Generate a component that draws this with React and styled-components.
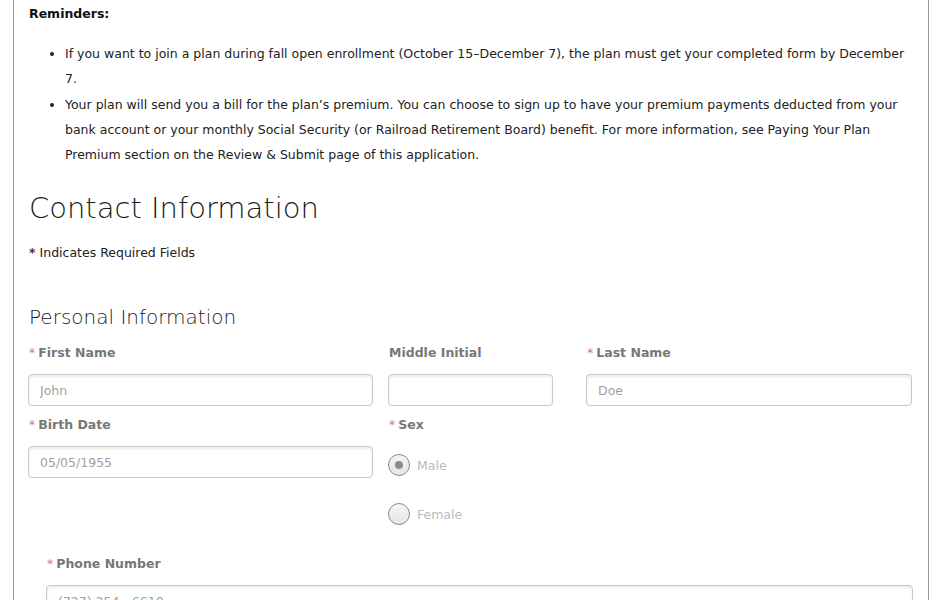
import React from 'react'
import styled, { createGlobalStyle } from 'styled-components'

const GlobalStyle = createGlobalStyle`
  body {
    margin: 0;
    background: #fff;
    font-family: "DejaVu Sans", "Open Sans", sans-serif;
    color: #222;
  }
`;

const Panel = styled.div`
  margin: 0 10px 0 13px;
  border-left: 1px solid #999;
  border-right: 1px solid #999;
  padding: 4px 15px 40px 15px;
  min-height: 600px;
  box-sizing: border-box;
`;

const ReminderTitle = styled.div`
  font-size: 12.5px;
  font-weight: bold;
  line-height: 20px;
  color: #111;
`;

const ReminderList = styled.ul`
  margin: 17px 0 0 0;
  padding-left: 36px;
  font-size: 12.5px;
  line-height: 25.3px;
  color: #222;
`;

const PageTitle = styled.h1`
  margin: 21px 0 0 0;
  font-size: 29px;
  font-weight: 200;
  line-height: 40px;
  color: #1a1a1a;
`;

const RequiredNote = styled.p`
  margin: 15px 0 0 0;
  font-size: 12.5px;
  line-height: 20px;
  color: #222;
`;

const NoteStar = styled.span`
  color: #7a1c12;
  font-weight: bold;
`;

const SectionTitle = styled.h2`
  margin: 39px 0 0 0;
  font-size: 20px;
  font-weight: 200;
  line-height: 30px;
  color: #222;
`;

const FieldGrid = styled.div`
  display: grid;
  grid-template-columns: 345px 165px 344px;
  column-gap: 15px;
  margin-top: 11px;
  margin-left: -1px;
  & > :nth-child(3n) {
    margin-left: 18px;
  }
`;

const Field = styled.div`
  display: flex;
  flex-direction: column;
`;

const Label = styled.label`
  font-size: 12.5px;
  font-weight: bold;
  color: #777;
  line-height: 20px;
  height: 20px;
  margin-bottom: 11px;
  padding-left: 1px;
`;

const Star = styled.span`
  color: #d4826f;
  font-weight: normal;
  margin-right: 3px;
`;

const Input = styled.input`
  box-sizing: border-box;
  height: 32px;
  width: 100%;
  border: 1px solid #c8c8c8;
  border-radius: 4px;
  box-shadow: inset 0 2px 3px rgba(0, 0, 0, 0.08);
  padding: 0 11px;
  font-family: inherit;
  font-size: 12.5px;
  color: #a0a0a0;
  margin-bottom: 9px;
  outline: none;
`;

const RadioGroup = styled.div`
  display: flex;
  flex-direction: column;
  gap: 27px;
  padding-top: 8px;
`;

const RadioRow = styled.label`
  display: flex;
  align-items: center;
  gap: 7px;
  font-size: 12.5px;
  color: #bbb;
`;

const RadioCircle = styled.span`
  box-sizing: border-box;
  width: 22px;
  height: 22px;
  border-radius: 50%;
  border: 1px solid #8a8a8a;
  background: linear-gradient(#f4f4f4, #e6e6e6);
  display: flex;
  align-items: center;
  justify-content: center;
  &::after {
    content: '';
    display: ${p => (p.$checked ? 'block' : 'none')};
    width: 8px;
    height: 8px;
    border-radius: 50%;
    background: #8c8c8c;
  }
`;

const PhoneBlock = styled.div`
  margin-top: 29px;
  padding-left: 17px;
  display: flex;
  flex-direction: column;
`;

function Radio({ label, checked }) {
  return (
    <RadioRow>
      <RadioCircle $checked={checked} />
      {label}
    </RadioRow>
  )
}

export default function App() {
  return (
    <>
      <GlobalStyle />
      <Panel>
        <ReminderTitle>Reminders:</ReminderTitle>
        <ReminderList>
          <li>
            If you want to join a plan during fall open enrollment (October 15–December 7), the plan must get your completed form by December 7.
          </li>
          <li>
            Your plan will send you a bill for the plan’s premium. You can choose to sign up to have your premium payments deducted from your bank account or your monthly Social Security (or Railroad Retirement Board) benefit. For more information, see Paying Your Plan Premium section on the Review &amp; Submit page of this application.
          </li>
        </ReminderList>

        <PageTitle>Contact Information</PageTitle>
        <RequiredNote><NoteStar>*</NoteStar> Indicates Required Fields</RequiredNote>

        <SectionTitle>Personal Information</SectionTitle>
        <FieldGrid>
          <Field>
            <Label><Star>*</Star>First Name</Label>
            <Input defaultValue="John" />
          </Field>
          <Field>
            <Label>Middle Initial</Label>
            <Input defaultValue="" />
          </Field>
          <Field>
            <Label><Star>*</Star>Last Name</Label>
            <Input defaultValue="Doe" />
          </Field>
          <Field>
            <Label><Star>*</Star>Birth Date</Label>
            <Input defaultValue="05/05/1955" />
          </Field>
          <Field>
            <Label><Star>*</Star>Sex</Label>
            <RadioGroup>
              <Radio label="Male" checked />
              <Radio label="Female" />
            </RadioGroup>
          </Field>
        </FieldGrid>

        <PhoneBlock>
          <Label><Star>*</Star>Phone Number</Label>
          <Input defaultValue="(727) 254 - 6610" />
        </PhoneBlock>
      </Panel>
    </>
  )
}
